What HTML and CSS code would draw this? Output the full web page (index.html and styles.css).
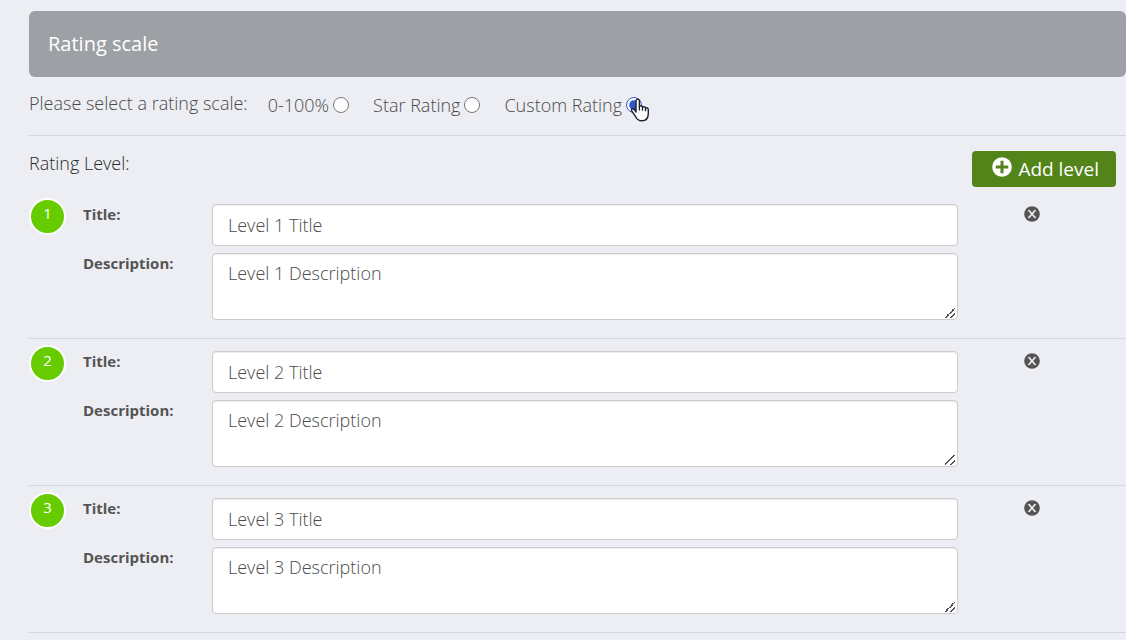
FILE: index.html
```html
<!DOCTYPE html>
<html lang="en">

<head>
    <meta charset="utf-8">
    <title>Rating scale</title>

    <link rel="stylesheet" href="styles.css">
</head>

<body>
    <svg class="sprite" aria-hidden="true">
        <symbol id="icon-remove" viewBox="0 0 16 16">
            <circle cx="8" cy="8" r="7.8" fill="#545454" />
            <path d="M4.900 4.500L11.100 11.500M11.100 4.500L4.900 11.500" fill="none" stroke="#edeef3" stroke-width="1.700" />
            <path d="M3.800 4.400h2.400M9.800 4.400h2.400M3.800 11.600h2.400M9.800 11.600h2.400" fill="none" stroke="#edeef3" stroke-width=".8" />
        </symbol>
    </svg>

    <form class="rating">
        <h2 class="rating__header">Rating scale</h2>

        <div class="scale" role="radiogroup" aria-labelledby="scale-caption">
            <span class="scale__caption" id="scale-caption">Please select a rating scale:</span>
            <label class="scale__option">0-100%<input type="radio" name="scale" value="percent"></label>
            <label class="scale__option">Star Rating<input type="radio" name="scale" value="star"></label>
            <label class="scale__option">Custom Rating<input type="radio" name="scale" value="custom" checked>
                <svg class="pointer" viewBox="0 0 20 24" aria-hidden="true">
                    <path d="M6 14V3.200C6 .4 9.400.4 9.400 3.200V8.500C10 7.300 12.300 7.500 12.500 9.300C13.300 8.200 15.300 8.600 15.500 10.200C16.500 9.300 18.300 10 18.300 11.800V15.500C18.300 20 16 22.800 11.800 22.800C8.500 22.800 6.900 21.200 5.600 18.700L1.700 12.800C.7 10.900 3.200 9.900 4.400 11.500Z" fill="#fff" stroke="#1c2030" stroke-width="1.400" stroke-linejoin="round" />
                    <path d="M9.400 8.500v4M12.500 9.300v3.500M15.500 10.200v3" fill="none" stroke="#1c2030" stroke-width="1.300" />
                </svg>
            </label>
        </div>

        <div class="toolbar">
            <h3 class="toolbar__title">Rating Level:</h3>
            <button class="add" type="button">
                <svg class="add__icon" viewBox="0 0 20 20" aria-hidden="true">
                    <circle cx="10" cy="10" r="9.800" fill="#fff" />
                    <path d="M10 3.800v12.400M3.800 10h12.400" stroke="#52841a" stroke-width="3" />
                </svg>
                Add level
            </button>
        </div>

        <section class="level">
            <span class="level__number">1</span>
            <div class="level__fields">
                <label class="level__label" for="title-1">Title:</label>
                <input class="field" type="text" id="title-1" value="Level 1 Title">
                <label class="level__label" for="description-1">Description:</label>
                <textarea class="field field--area" id="description-1">Level 1 Description</textarea>
            </div>
            <button class="remove" type="button" aria-label="Remove level 1"><svg><use href="#icon-remove" /></svg></button>
        </section>

        <section class="level">
            <span class="level__number">2</span>
            <div class="level__fields">
                <label class="level__label" for="title-2">Title:</label>
                <input class="field" type="text" id="title-2" value="Level 2 Title">
                <label class="level__label" for="description-2">Description:</label>
                <textarea class="field field--area" id="description-2">Level 2 Description</textarea>
            </div>
            <button class="remove" type="button" aria-label="Remove level 2"><svg><use href="#icon-remove" /></svg></button>
        </section>

        <section class="level">
            <span class="level__number">3</span>
            <div class="level__fields">
                <label class="level__label" for="title-3">Title:</label>
                <input class="field" type="text" id="title-3" value="Level 3 Title">
                <label class="level__label" for="description-3">Description:</label>
                <textarea class="field field--area" id="description-3">Level 3 Description</textarea>
            </div>
            <button class="remove" type="button" aria-label="Remove level 3"><svg><use href="#icon-remove" /></svg></button>
        </section>
    </form>
</body>

</html>
```

FILE: styles.css
```css
* {
    box-sizing: border-box;
    padding: 0;
    margin: 0;
}

body {
    background: #edeef3;
    color: #4a4a4a;
    font: 300 18px/24px "Open Sans", sans-serif;
}

button,
input,
textarea {
    font: inherit;
    color: inherit;
}

.sprite {
    display: none;
}

.rating {
    padding: 11px 0 0 29px;
}

.rating__header {
    padding: 20px 19px;
    border-radius: 6px;
    background: #9da0a4;
    color: #fff;
    font-size: 20px;
    font-weight: 400;
    line-height: 26px;
}

/* Scale type */
.scale {
    display: flex;
    align-items: flex-start;
    padding: 14px 0 18px;
    border-bottom: 1px solid #d6d7dc;
}

.scale__caption {
    margin-right: 20px;
}

.scale__option {
    position: relative;
    display: flex;
    align-items: center;
    gap: 4px;
    margin-right: 24px;
    padding-top: 2px;
}

.scale__option input {
    width: 16px;
    height: 16px;
    accent-color: #2f58cd;
}

.pointer {
    position: absolute;
    top: 7px;
    right: -8px;
    width: 20px;
    height: 24px;
}

.toolbar {
    display: flex;
    align-items: flex-start;
    justify-content: space-between;
    padding: 15px 10px 5px 0;
}

.toolbar__title {
    color: #2a2a2a;
    font-size: 18px;
    font-weight: 300;
}

.add {
    display: flex;
    align-items: center;
    gap: 6px;
    height: 36px;
    padding: 0 17px 0 20px;
    border: 0;
    border-radius: 4px;
    background: #52841a;
    color: #fff;
    font-size: 19px;
    font-weight: 400;
}

.add__icon {
    width: 20px;
    height: 20px;
    margin-bottom: 4px;
}

/* Levels */
.level {
    display: flex;
    align-items: flex-start;
    padding: 6px 0 18px;
    border-bottom: 1px solid #d6d7dc;
}

.level__number {
    width: 37px;
    height: 37px;
    border: 2px solid #fff;
    border-radius: 50%;
    background: #6c0;
    color: #fff;
    font-size: 15px;
    font-weight: 400;
    line-height: 26px;
    text-align: center;
}

.level__fields {
    flex: 1;
    display: grid;
    grid-template-columns: 129px 1fr;
    row-gap: 7px;
    padding: 6px 0 0 17px;
}

.level__label {
    color: #545454;
    font-size: 15px;
    font-weight: 700;
    line-height: 20px;
}

.field {
    width: 100%;
    height: 42px;
    padding: 8px 15px;
    border: 1px solid #ccc;
    border-radius: 4px;
    background: #fff;
    box-shadow: inset 0 1px 1px rgba(0, 0, 0, 0.075);
}

.field--area {
    display: block;
    height: 67px;
    padding-top: 7px;
    resize: vertical;
}

.field--area::-webkit-resizer {
    background: linear-gradient(135deg, transparent 45%, #555 45%, #555 55%, transparent 55%, transparent 72%, #555 72%, #555 82%, transparent 82%) 3px 4px / 10px 10px no-repeat;
}

.remove {
    width: 16px;
    height: 16px;
    margin: 8px 86px 0 66px;
    border: 0;
    background: none;
}

.remove svg {
    display: block;
    width: 16px;
    height: 16px;
}
```
